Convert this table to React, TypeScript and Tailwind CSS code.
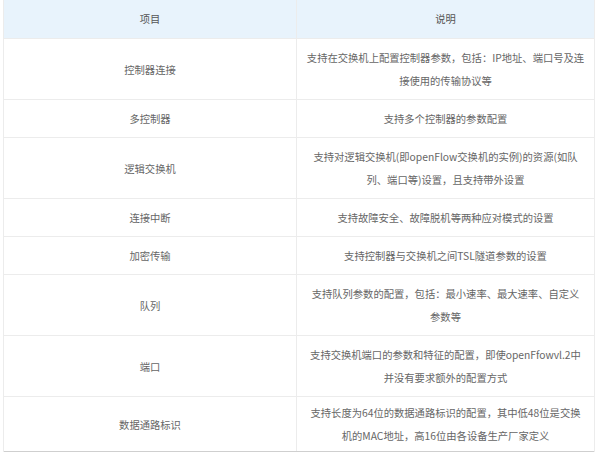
import React from 'react';

type Row = { name: string; desc: string[] };

const rows: Row[] = [
  { name: '控制器连接', desc: ['支持在交换机上配置控制器参数，包括：IP地址、端口号及连', '接使用的传输协议等'] },
  { name: '多控制器', desc: ['支持多个控制器的参数配置'] },
  { name: '逻辑交换机', desc: ['支持对逻辑交换机(即openFlow交换机的实例)的资源(如队', '列、端口等)设置，且支持带外设置'] },
  { name: '连接中断', desc: ['支持故障安全、故障脱机等两种应对模式的设置'] },
  { name: '加密传输', desc: ['支持控制器与交换机之间TSL隧道参数的设置'] },
  { name: '队列', desc: ['支持队列参数的配置，包括：最小速率、最大速率、自定义', '参数等'] },
  { name: '端口', desc: ['支持交换机端口的参数和特征的配置，即使openFfowvl.2中', '并没有要求额外的配置方式'] },
  { name: '数据通路标识', desc: ['支持长度为64位的数据通路标识的配置，其中低48位是交换', '机的MAC地址，高16位由各设备生产厂家定义'] },
];

const App = () => {
  return (
    <div
      className="w-[600px] h-[452px] overflow-hidden bg-white pl-[3px] text-[10.3px] text-[#666]"
      style={{ fontFamily: '"Noto Sans CJK SC", "Noto Sans", sans-serif' }}
    >
      <div className="w-[592px] border-x border-[#ececec]">
        {/* header */}
        <div className="grid grid-cols-[293px_1fr] h-[38px] bg-[#e8f3fc] text-[#555]">
          <div className="flex items-center justify-center border-r border-[#ececec]">项目</div>
          <div className="flex items-center justify-center">说明</div>
        </div>

        {rows.map((r, i) => {
          const last = i === rows.length - 1;
          return (
            <div
              key={r.name}
              className={
                last
                  ? 'grid grid-cols-[293px_1fr] border-t border-b border-t-[#ececec] border-b-[#cfcfcf]'
                  : 'grid grid-cols-[293px_1fr] border-t border-[#ececec]'
              }
            >
              <div className={`flex items-center justify-center border-r border-[#ececec] leading-[23px] ${last ? 'py-[4px]' : 'py-[7px]'}`}>
                {r.name}
              </div>
              <div className={`flex flex-col items-center justify-center leading-[23px] ${last ? 'py-[4px]' : 'py-[7px]'}`}>
                {r.desc.map((d) => (
                  <span key={d} className="whitespace-nowrap">{d}</span>
                ))}
              </div>
            </div>
          );
        })}
      </div>
    </div>
  );
};

export default App;
